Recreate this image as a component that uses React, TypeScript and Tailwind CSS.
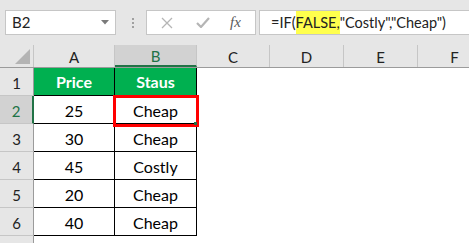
import React from 'react';

const font = { fontFamily: 'Lato, "Open Sans", sans-serif' };

const cols = [
  { key: 'A', w: 'w-[81px]' },
  { key: 'B', w: 'w-[82px]' },
  { key: 'C', w: 'w-[73px]' },
  { key: 'D', w: 'w-[74px]' },
  { key: 'E', w: 'w-[74px]' },
  { key: 'F', w: 'w-[74px]' },
];

const rows = [
  { price: '25', status: 'Cheap' },
  { price: '30', status: 'Cheap' },
  { price: '45', status: 'Costly' },
  { price: '20', status: 'Cheap' },
  { price: '40', status: 'Cheap' },
];

// Formula bar with name box, separator and the cancel / enter / fx buttons
const FormulaBar: React.FC = () => (
  <div className="flex h-[45px] items-start bg-[#e6e6e6] pt-[10px]">
    <div className="ml-[5px] flex h-[25px] w-[111px] items-center justify-between border border-[#c6c6c6] bg-white pl-[6px] pr-[6px]">
      <span className="text-[15px] text-[#222]">B2</span>
      <svg width="8" height="5" viewBox="0 0 8 5">
        <path d="M0 0h8L4 4.5z" fill="#7a7a7a" />
      </svg>
    </div>
    <div className="ml-[15px] flex h-[25px] w-[3px] flex-col items-center justify-center gap-[2px]">
      <span className="h-[2px] w-[2px] bg-[#a0a0a0]" />
      <span className="h-[2px] w-[2px] bg-[#a0a0a0]" />
      <span className="h-[2px] w-[2px] bg-[#a0a0a0]" />
    </div>
    <div className="ml-[12px] flex h-[25px] w-[110px] items-center border border-[#c6c6c6] bg-white">
      <svg className="ml-[14px]" width="12" height="12" viewBox="0 0 12 12">
        <path d="M1 1l10 10M11 1L1 11" stroke="#b5b5b5" strokeWidth="1.3" />
      </svg>
      <svg className="ml-[23px]" width="14" height="11" viewBox="0 0 14 11">
        <path d="M1 6l4 4 8-9" stroke="#b5b5b5" strokeWidth="2.2" fill="none" />
      </svg>
      <span
        className="ml-[20px] text-[15px] italic text-[#5a5a5a]"
        style={{ fontFamily: '"Liberation Serif", serif' }}
      >
        fx
      </span>
    </div>
    <div className="ml-[3px] flex h-[25px] flex-1 items-center border border-r-0 border-[#c6c6c6] bg-white pl-[11px] text-[14.5px] text-[#222]">
      <span>=IF(</span>
      <span className="flex h-[23px] items-center bg-[#ffff4d]">FALSE,</span>
      <span>"Costly","Cheap")</span>
    </div>
  </div>
);

const ColumnHeaders: React.FC = () => (
  <div className="flex h-[23px] border-b border-[#9b9b9b] bg-[#e6e6e6]">
    <div className="relative w-[34px] shrink-0 border-r border-[#c6c6c6]">
      <svg className="absolute bottom-[3px] right-[3px]" width="15" height="15" viewBox="0 0 15 15">
        <path d="M15 0V15H0z" fill="#b4b4b4" />
      </svg>
    </div>
    {cols.map((c) =>
      c.key === 'B' ? (
        <div
          key={c.key}
          className={`${c.w} flex shrink-0 items-center justify-center border-b-2 border-r border-b-[#217346] border-r-[#c6c6c6] bg-[#d2d2d2] pt-[2px] text-[15px] text-[#217346]`}
        >
          {c.key}
        </div>
      ) : (
        <div
          key={c.key}
          className={`${c.w} flex shrink-0 items-center justify-center border-r border-[#c6c6c6] pt-[2px] text-[15px] text-[#222]`}
        >
          {c.key}
        </div>
      )
    )}
  </div>
);

const RowHeader: React.FC<{ n: number; selected?: boolean }> = ({ n, selected }) => (
  <div
    className={`flex h-full w-[34px] shrink-0 items-end justify-center border-b pb-[1px] text-[15px] ${
      selected
        ? 'border-r-2 border-b-[#c6c6c6] border-r-[#217346] bg-[#d2d2d2] text-[#217346]'
        : 'border-r border-b-[#c6c6c6] border-r-[#9b9b9b] bg-[#e6e6e6] text-[#222]'
    }`}
  >
    {n}
  </div>
);

export default function App() {
  return (
    <div className="h-[243px] w-[469px] overflow-hidden bg-white" style={font}>
      <FormulaBar />
      <ColumnHeaders />
      <div className="relative">
        <div className="flex h-[28px]">
          <RowHeader n={1} />
          <div className="flex w-[81px] shrink-0 items-center justify-center border-b border-r border-black bg-[#00b050] text-[16px] font-bold text-white">
            Price
          </div>
          <div className="flex w-[82px] shrink-0 items-center justify-center border-b border-r border-black bg-[#00b050] text-[16px] font-bold text-white">
            Staus
          </div>
        </div>
        {rows.map((r, i) => (
          <div key={i} className="flex h-[28px]">
            <RowHeader n={i + 2} selected={i === 0} />
            <div className="flex w-[81px] shrink-0 items-center justify-center border-b border-r border-black pt-[2px] text-[16px] text-black">
              {r.price}
            </div>
            <div className="flex w-[82px] shrink-0 items-center justify-center border-b border-r border-black pt-[2px] text-[16px] text-black">
              {r.status}
            </div>
          </div>
        ))}
        <div className="flex h-[28px]">
          <div className="w-[34px] shrink-0 border-r border-[#9b9b9b] bg-[#e6e6e6]" />
        </div>
        {/* active cell outline */}
        <div className="absolute left-[113px] top-[27px] h-[32px] w-[86px] border-[3px] border-[#ff0000]" />
        <div className="absolute left-[194px] top-[54px] h-[3px] w-[3px] bg-[#217346]" />
      </div>
    </div>
  );
}
